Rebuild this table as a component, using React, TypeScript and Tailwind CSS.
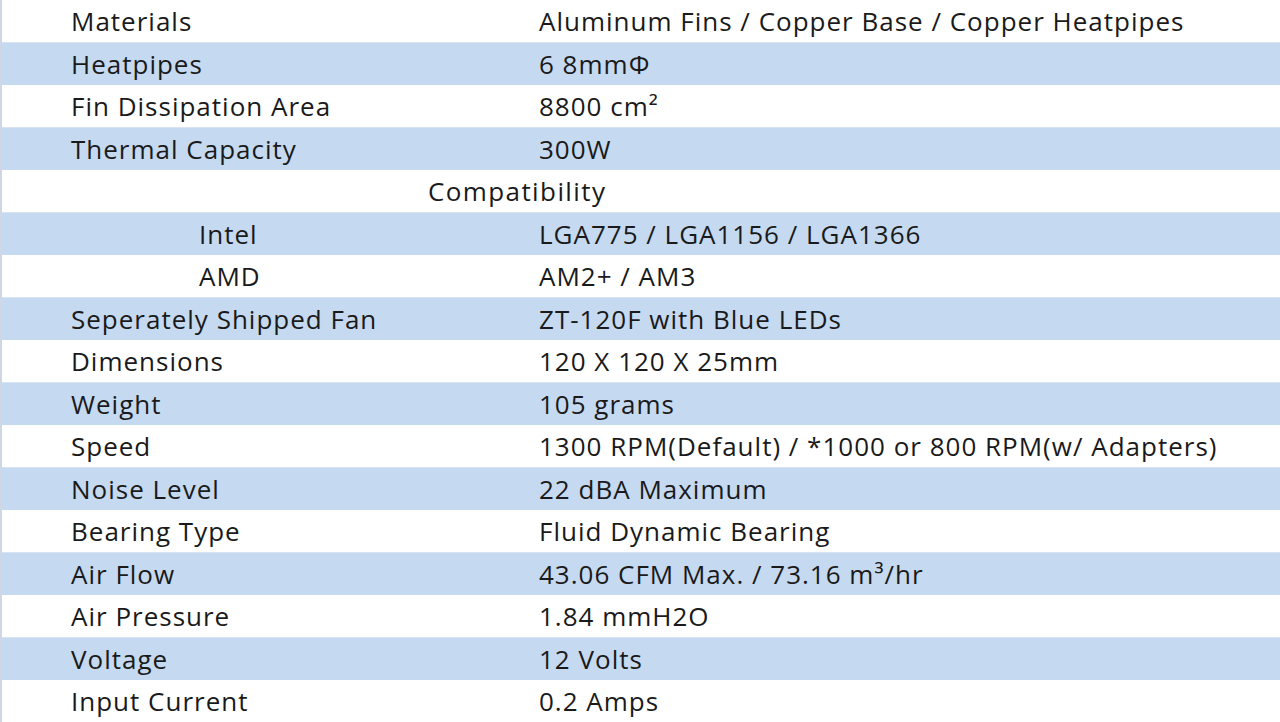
const specs: { label: string; value: string; kind?: "head" | "sub" }[] = [
  { label: "Materials", value: "Aluminum Fins / Copper Base / Copper Heatpipes" },
  { label: "Heatpipes", value: "6 8mmΦ" },
  { label: "Fin Dissipation Area", value: "8800 cm²" },
  { label: "Thermal Capacity", value: "300W" },
  { label: "Compatibility", value: "", kind: "head" },
  { label: "Intel", value: "LGA775 / LGA1156 / LGA1366", kind: "sub" },
  { label: "AMD", value: "AM2+ / AM3", kind: "sub" },
  { label: "Seperately Shipped Fan", value: "ZT-120F with Blue LEDs" },
  { label: "Dimensions", value: "120 X 120 X 25mm" },
  { label: "Weight", value: "105 grams" },
  { label: "Speed", value: "1300 RPM(Default) / *1000 or 800 RPM(w/ Adapters)" },
  { label: "Noise Level", value: "22 dBA Maximum" },
  { label: "Bearing Type", value: "Fluid Dynamic Bearing" },
  { label: "Air Flow", value: "43.06 CFM Max. / 73.16 m³/hr" },
  { label: "Air Pressure", value: "1.84 mmH2O" },
  { label: "Voltage", value: "12 Volts" },
  { label: "Input Current", value: "0.2 Amps" },
];

export default function App() {
  return (
    <div
      className="w-[1280px] h-[722px] overflow-hidden bg-white border-l-2 border-[#cfd6e4] grid grid-rows-[repeat(17,minmax(0,1fr))] text-[26px] tracking-[1px] text-[#1a1a1a]"
      style={{ fontFamily: "'Open Sans', sans-serif" }}
    >
      {specs.map((row, i) => {
        const blue = i % 2 === 1;
        return (
          <div
            key={row.label}
            className={`flex items-center leading-none ${blue ? "bg-[#c5d9f1] border-t border-[#d8e4f3]" : "bg-white"}`}
          >
            {row.kind === "head" ? (
              <span className="pl-[426px] tracking-[1.4px]">{row.label}</span>
            ) : (
              <>
                <span className={`shrink-0 ${row.kind === "sub" ? "w-[537px] pl-[197px]" : "w-[537px] pl-[69px]"}`}>
                  {row.label}
                </span>
                <span>{row.value}</span>
              </>
            )}
          </div>
        );
      })}
    </div>
  );
}
